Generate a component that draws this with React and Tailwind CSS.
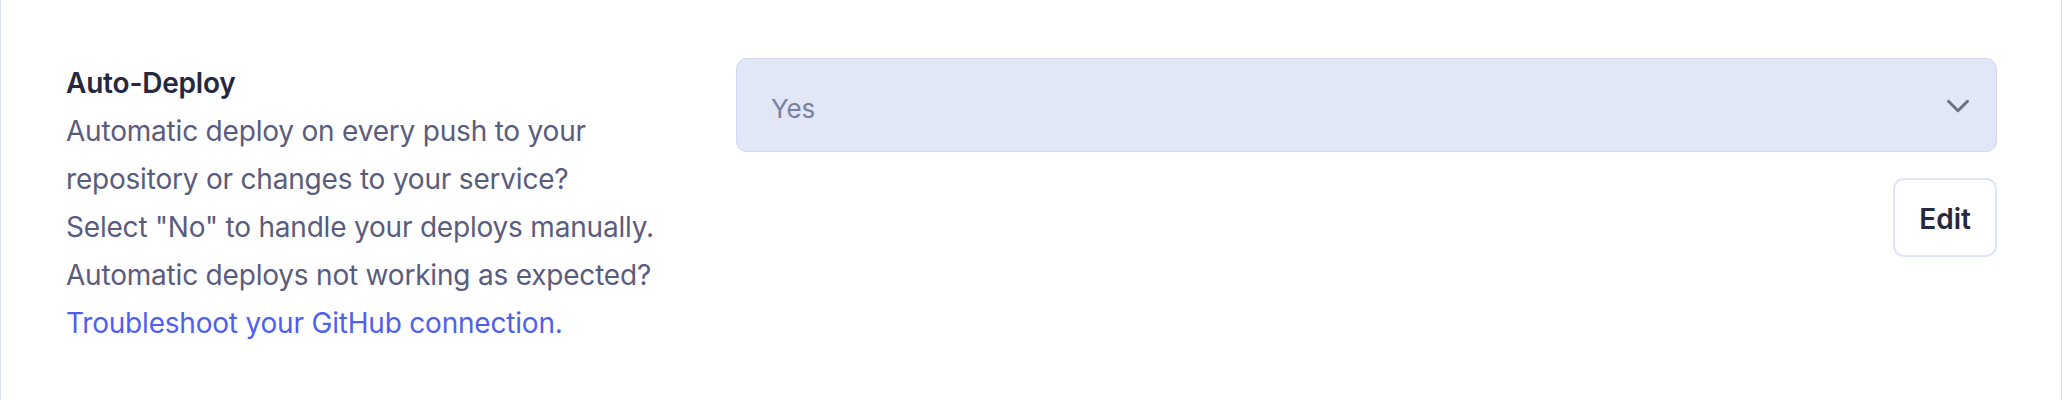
import { ChevronDown } from 'lucide-react';

export default function App() {
  return (
    <div className="w-[2062px] h-[400px] bg-white border-x border-[#d6dff3] font-['Inter',sans-serif]">
      <div className="flex pl-[65px] pr-[64px] pt-[58px]">
        {/* Label + help text */}
        <div className="w-[640px] shrink-0 mr-[30px]">
          <h3 className="text-[28px] leading-[48px] font-semibold text-[#26283f] tracking-[-0.2px] mt-[1px]">
            Auto-Deploy
          </h3>
          <div className="text-[28px] leading-[48px] text-[#5a5c7d] tracking-[-0.2px]">
            <p>
              Automatic deploy on every push to your
              <br />
              repository or changes to your service?
            </p>
            <p>Select "No" to handle your deploys manually.</p>
            <p>Automatic deploys not working as expected?</p>
            <a href="#" className="text-[#4f5ff0]">
              Troubleshoot your GitHub connection.
            </a>
          </div>
        </div>

        {/* Select + action */}
        <div className="flex-1 flex flex-col items-end">
          <div className="w-full h-[94px] flex items-center justify-between pl-[34px] pr-[19px] bg-[#e1e7f6] border border-[#cfd8ee] rounded-[11px]">
            <span className="mt-[7px] text-[26px] text-[#7b7f9f] tracking-[-0.2px]">Yes</span>
            <ChevronDown className="w-[38px] h-[38px] mt-[2px] text-[#6d7085]" strokeWidth={1.9} />
          </div>
          <button className="mt-[26px] h-[79px] px-[24px] pt-[2px] bg-white border-2 border-[#dde5f7] rounded-[11px] text-[28px] font-semibold text-[#26283f]">
            Edit
          </button>
        </div>
      </div>
    </div>
  );
}
